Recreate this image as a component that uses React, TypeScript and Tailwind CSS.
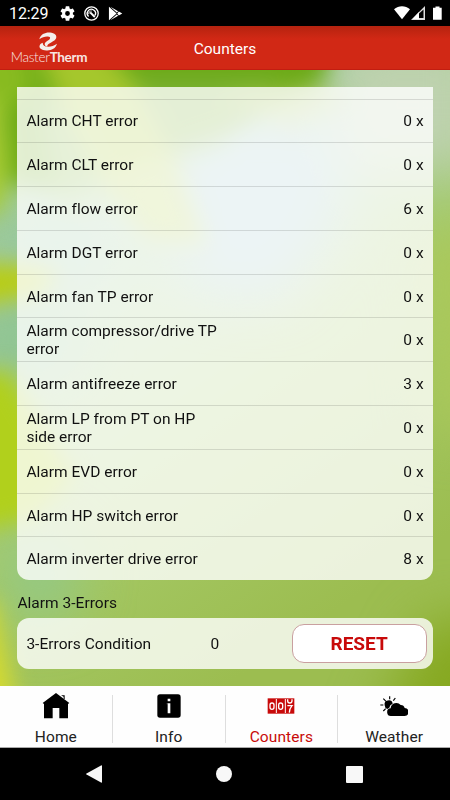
import type { ReactNode } from 'react';

const alarms = [
  { label: 'Alarm CHT error', count: 0 },
  { label: 'Alarm CLT error', count: 0 },
  { label: 'Alarm flow error', count: 6 },
  { label: 'Alarm DGT error', count: 0 },
  { label: 'Alarm fan TP error', count: 0 },
  { label: 'Alarm compressor/drive TP error', count: 0 },
  { label: 'Alarm antifreeze error', count: 3 },
  { label: 'Alarm LP from PT on HP side error', count: 0 },
  { label: 'Alarm EVD error', count: 0 },
  { label: 'Alarm HP switch error', count: 0 },
  { label: 'Alarm inverter drive error', count: 8 },
];

const StatusBar = () => (
  <div className="flex h-[26px] shrink-0 items-center bg-black pl-[9px] pr-2 text-white">
    <span className="w-[39px] pt-[2px] text-[16px] leading-none tracking-[-0.1px] whitespace-nowrap">12:29</span>
    {/* Settings */}
    <svg className="ml-3 h-[15px] w-[15px]" viewBox="2 2 20 20" fill="currentColor">
      <path d="M19.14 12.94c.04-.3.06-.61.06-.94s-.02-.64-.07-.94l2.03-1.58a.49.49 0 0 0 .12-.61l-1.92-3.32a.49.49 0 0 0-.59-.22l-2.39.96a7 7 0 0 0-1.62-.94l-.36-2.54a.48.48 0 0 0-.48-.41h-3.84a.47.47 0 0 0-.47.41l-.36 2.54c-.59.24-1.13.57-1.62.94l-2.39-.96a.48.48 0 0 0-.59.22L2.74 8.87a.48.48 0 0 0 .12.61l2.03 1.58a6 6 0 0 0 0 1.88l-2.03 1.58a.49.49 0 0 0-.12.61l1.92 3.32c.12.22.37.29.59.22l2.39-.96c.5.38 1.03.7 1.62.94l.36 2.54c.05.24.24.41.48.41h3.84c.24 0 .44-.17.47-.41l.36-2.54a7 7 0 0 0 1.62-.94l2.39.96c.22.08.47 0 .59-.22l1.92-3.32a.48.48 0 0 0-.12-.61zM12 15.2a3.2 3.2 0 1 1 0-6.4 3.2 3.2 0 0 1 0 6.4z" />
    </svg>
    {/* Service badge */}
    <svg className="ml-[9px] h-[15px] w-[15px]" viewBox="0 0 15 15" fill="none" stroke="currentColor">
      <circle cx="7.5" cy="7.5" r="6.7" strokeWidth="1.3" />
      <path d="M4.6 10.4A4.1 4.1 0 1 1 11 9.4" strokeWidth="1.4" />
      <path d="M6.2 6.4 10.8 11" strokeWidth="2" />
      <path d="M4.8 8.2a2.6 2.6 0 0 1 3-3.2" strokeWidth="0.9" />
    </svg>
    {/* Play store */}
    <svg className="ml-[9px] h-[15px] w-[15px]" viewBox="0 0 14 14" fill="currentColor">
      <path d="M.9.6 8 7 .9 13.4z" />
      <path d="M2.2.8 9.5 4.8 8.2 6.1zM10.1 5.2 13.3 7l-3.2 1.8L8.6 7zM9.5 9.2 2.2 13.2 8.2 7.9z" />
    </svg>
    <svg className="ml-auto h-[14px] w-[48px]" viewBox="0 0 48 14" fill="currentColor">
      <path d="M0 3.2C4.6-.8 11.4-.8 16 3.2L8 13.2z" />
      <path d="M31 0v14H17z" fill="#ddd" />
      <path d="M25 7.5 29.5 3.5v8.5H25z" fill="#000" />
      <path d="M25 6v7h-6.5z" />
      <path d="M41.5.5h4v1.2h2.2v12H39v-12h2.5z" />
    </svg>
  </div>
);

const Header = () => (
  <header className="grid h-11 shrink-0 grid-cols-3 items-center border-b border-[#c21d10] bg-linear-to-b from-[#b5230f] via-[#d12815] via-30% to-[#d12815] text-white">
    <div className="flex w-[98px] flex-col items-center pt-[2px]">
      <svg className="mr-[2px] h-[19px] w-[20px]" viewBox="0 0 60 56" fill="#f4efec">
        <path d="M4 21C8 6 22 0 36 1c14 1 22 9 18 18-4 8-13 10-20 15-5 3-7 6-6 10-8-2-10-8-6-13 4-5 12-6 14-12 2-5-3-7-9-6-8 0-15 3-23 8z" />
        <path d="M57 35C53 50 39 56 25 55 11 54 2 48 5 40c1-4 5-6 9-8 0 8 6 12 16 12 10 0 19-3 27-9z" />
      </svg>
      <span className="mt-[-1px] font-['Lato'] text-[13.5px] leading-[15px] tracking-[-0.3px] text-[#f8e5e1]">
        <span className="font-light">Master</span>
        <span className="font-bold">Therm</span>
      </span>
    </div>
    <h1 className="pt-[5px] text-center text-[15.5px]">Counters</h1>
  </header>
);

// Soft leaf backdrop behind the cards
const Backdrop = () => (
  <svg className="absolute inset-0 h-full w-full" viewBox="0 70 450 616" preserveAspectRatio="none">
    <defs>
      <linearGradient id="base" x1="0" y1="0" x2="0.5" y2="1">
        <stop offset="0" stopColor="#98c890" />
        <stop offset="0.3" stopColor="#a2cc9c" />
        <stop offset="0.65" stopColor="#a6ca68" />
        <stop offset="1" stopColor="#9cbd50" />
      </linearGradient>
      <filter id="soft" x="-50%" y="-50%" width="200%" height="200%" colorInterpolationFilters="sRGB">
        <feGaussianBlur stdDeviation="11" />
      </filter>
      <filter id="wide" x="-50%" y="-50%" width="200%" height="200%" colorInterpolationFilters="sRGB">
        <feGaussianBlur stdDeviation="26" />
      </filter>
    </defs>
    <rect y="70" width="450" height="616" fill="url(#base)" />
    <g filter="url(#wide)">
      <path d="M180 120h170l-10 100-60 80-90-10-20-70z" fill="#a0c8cc" />
      <path d="M330 40h150v130H340z" fill="#bfd2b0" />
      <path d="M415 230h80v200h-60z" fill="#aac85a" />
      <path d="M430 620h80v120H370z" fill="#86a820" />
      <ellipse cx="40" cy="575" rx="40" ry="50" fill="#94c884" />
      <ellipse cx="20" cy="340" rx="60" ry="40" fill="#8ec494" />
      <ellipse cx="60" cy="250" rx="50" ry="30" fill="#8ec4a4" />
    </g>
    <g filter="url(#soft)">
      <path d="M-40 30H335L325 80l-90 50-90 30L70 195 0 180l-40-20z" fill="#68a810" opacity=".95" />
      <path d="M120 80h160l-60 70-60 20z" fill="#8cba50" opacity=".5" />
      <path d="M40 100l60 20 30 80-70 20z" fill="#9cc86c" opacity=".5" />
      <path d="M30 30h62l46 60 36 70 34 86-60-6-40-50-50-90z" fill="#b8d034" opacity=".75" />
      <path d="M-20 30h36l20 60-30 20-30-10z" fill="#88bb20" />
      <path d="M220 96l90-10 40 14-60 28z" fill="#b0c850" opacity=".6" />
      <path d="M-30 100h32l8 70-6 40-34 10z" fill="#a8cc34" />
      <path d="M-30 264h40l50 8-20 22-80 16z" fill="#b9cd14" />
      <path d="M-40 380 8 368l66 110-40 40-74 18z" fill="#b1d01c" />
      <path d="M-30 600h24l24 110-44 20z" fill="#d4da30" />
    </g>
  </svg>
);

const HomeIcon = () => (
  <svg className="h-7 w-7" viewBox="126 34 84 84">
    <path d="m168 37 40 30-4 3v43h-26V82h-20v31h-26V70l-4-3z" />
    <path d="M183 44h11v11h-3v-7z" />
  </svg>
);

const InfoIcon = () => (
  <svg className="h-7 w-7" viewBox="463 34 84 84">
    <rect x="470" y="41" width="70" height="70" rx="8" />
    <path fill="#fff" d="M501 54h8v8h-8zM501 68h8v30h-8z" />
    <path fill="#fff" opacity=".4" d="M498 68h3v3h-3z" />
  </svg>
);

const CountersIcon = () => (
  <svg className="h-7 w-7" viewBox="126 34 84 84">
    <rect x="128" y="53" width="80" height="46" fill="#c80a0a" />
    <g fill="none" stroke="#fff" strokeWidth="4">
      <rect x="135" y="67" width="12" height="19" rx="6" />
      <rect x="161" y="67" width="12" height="19" rx="6" />
      <path d="M188 56v4q0 7 6.500 7t6.500-7v-4M187 75h14q-7 8-8 21" />
    </g>
    <path d="M154 55v42M181 55v42" stroke="#fff" strokeWidth="3" />
  </svg>
);

const WeatherIcon = () => (
  <svg className="h-7 w-7" viewBox="464 34 84 84">
    <path d="M478 74a12 12 0 0 1 24-5q-9 3-10 12l-6 4q-8-3-8-11z" />
    <path
      d="M493 47v9M474 54l8 8M510 52l-6 8M465 73h9M474 91l7-7"
      stroke="#000"
      strokeWidth="3.5"
    />
    <path d="M498 106a11.500 11.500 0 0 1-2-23 17 17 0 0 1 30-10 12 12 0 0 1 12 9 12 12 0 0 1-1 24z" />
  </svg>
);

const Tab = ({ icon, label, active = false }: { icon: ReactNode; label: string; active?: boolean }) => (
  <a className={active ? 'flex flex-1 flex-col items-center text-[#c80a0a]' : 'flex flex-1 flex-col items-center text-[#222]'}>
    {icon}
    <span className="mt-2 text-[15.5px] leading-[18px] tracking-[0.1px]">{label}</span>
  </a>
);

const Divider = () => <div className="mt-[3px] h-12 w-px bg-[#dedede]" />;

const App = () => {
  return (
    <div className="flex h-[800px] w-[450px] flex-col overflow-hidden bg-black font-['Roboto',sans-serif] text-[15.5px] tracking-[0.02px] text-[#111]">
      <StatusBar />
      <Header />

      <main className="relative h-[616px] shrink-0 overflow-hidden">
        <Backdrop />
        <div className="relative px-[17.4px] pt-[17px]">
          {/* Alarm list, scrolled to the end */}
          <div className="overflow-hidden rounded-b-xl bg-white/80">
            <div className="h-[11.5px]" />
            {alarms.map((alarm) => (
              <div
                key={alarm.label}
                className="flex h-[43.8px] items-center justify-between border-t border-black/12 px-[9px] pt-px leading-[18px]"
              >
                <span className="w-[200px]">{alarm.label}</span>
                <span>{alarm.count} x</span>
              </div>
            ))}
          </div>

          <h2 className="mt-[14px] mb-[5.7px] leading-[18px]">Alarm 3-Errors</h2>
          <div className="flex h-[51px] items-center rounded-xl bg-white/80 pr-[6px] pl-[9px]">
            <span className="w-[184px] pt-[2px]">3-Errors Condition</span>
            <span className="pt-[2px]">0</span>
            <button className="ml-auto h-[39px] w-[135px] rounded-xl border border-[#c9a0a0] bg-white pt-[2px] text-[19px] font-bold tracking-normal text-[#c80a0a]">
              RESET
            </button>
          </div>
        </div>
      </main>

      <nav className="flex h-[62px] shrink-0 border-b border-[#aaa] bg-[#fefefe] pt-[6px]">
        <Tab icon={<HomeIcon />} label="Home" />
        <Divider />
        <Tab icon={<InfoIcon />} label="Info" />
        <Divider />
        <Tab icon={<CountersIcon />} label="Counters" active />
        <Divider />
        <Tab icon={<WeatherIcon />} label="Weather" />
      </nav>

      {/* Android navigation */}
      <div className="flex flex-1 items-center justify-between bg-black pr-[87px] pl-[86px]">
        <svg className="h-[18px] w-4" viewBox="0 0 16 18" fill="#f8f8f8">
          <path d="M15 .5Q16 0 16 1v16q0 1-1 .5L.5 9.5q-.8-.5 0-1z" />
        </svg>
        <div className="h-4 w-4 rounded-full bg-[#f8f8f8]" />
        <div className="h-[17px] w-[17px] rounded-[1px] bg-[#f8f8f8]" />
      </div>
    </div>
  );
};

export default App;
